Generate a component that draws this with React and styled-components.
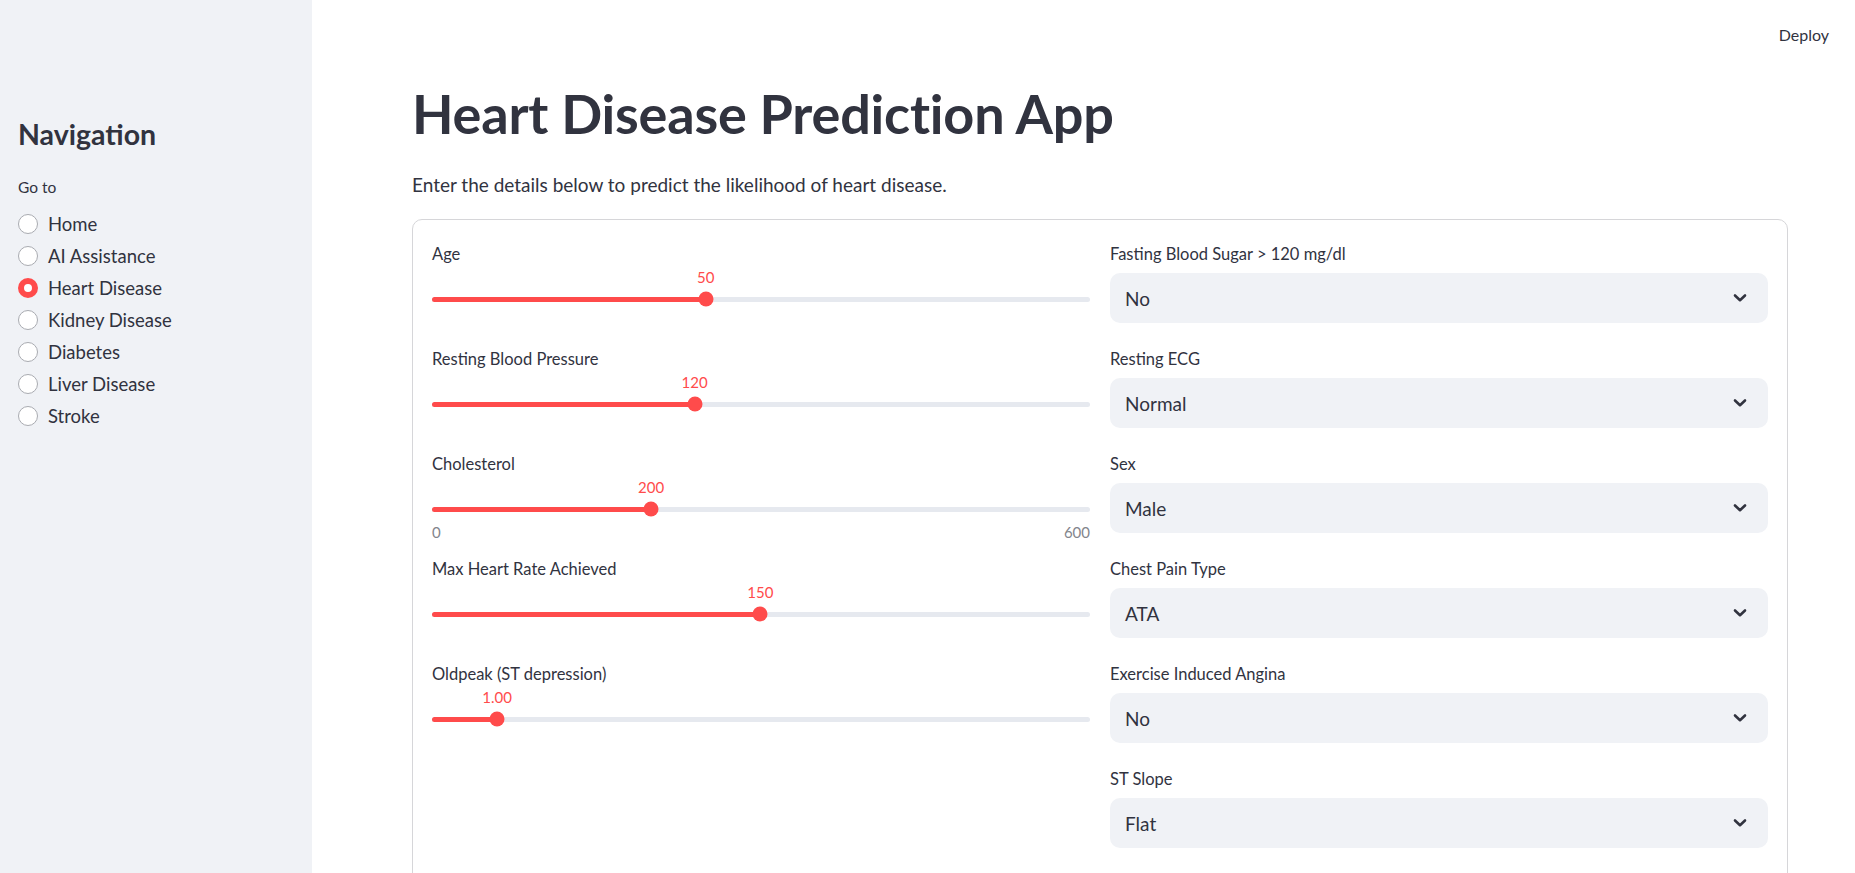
import React from 'react';
import styled, { createGlobalStyle } from 'styled-components';

const GlobalStyle = createGlobalStyle`
  html, body {
    margin: 0;
    padding: 0;
    background: #ffffff;
    font-family: Lato, "Liberation Sans", sans-serif;
    color: #31333f;
    overflow: hidden;
  }
`;

const pages = ['Home', 'AI Assistance', 'Heart Disease', 'Kidney Disease', 'Diabetes', 'Liver Disease', 'Stroke'];

const sliders = [
  { label: 'Age', value: '50', frac: 0.416 },
  { label: 'Resting Blood Pressure', value: '120', frac: 0.399 },
  { label: 'Cholesterol', value: '200', frac: 0.333, min: '0', max: '600' },
  { label: 'Max Heart Rate Achieved', value: '150', frac: 0.499 },
  { label: 'Oldpeak (ST depression)', value: '1.00', frac: 0.099 },
];

const selects = [
  { label: 'Fasting Blood Sugar > 120 mg/dl', value: 'No' },
  { label: 'Resting ECG', value: 'Normal' },
  { label: 'Sex', value: 'Male' },
  { label: 'Chest Pain Type', value: 'ATA' },
  { label: 'Exercise Induced Angina', value: 'No' },
  { label: 'ST Slope', value: 'Flat' },
];

const Chevron = () => (
  <svg width="14" height="10" viewBox="0 0 14 10" fill="none">
    <polyline points="2,2.5 7,7.2 12,2.5" stroke="#31333f" strokeWidth="2.6" strokeLinecap="round" strokeLinejoin="round" />
  </svg>
);

const Slider = ({ label, value, frac, min, max }) => (
  <Field>
    <Label>{label}</Label>
    <SliderArea>
      <ValueRow>
        <ThumbValue style={{ left: `${frac * 100}%` }}>{value}</ThumbValue>
      </ValueRow>
      <TrackRow>
        <Track>
          <Fill style={{ width: `${frac * 100}%` }} />
          <Thumb style={{ left: `${frac * 100}%` }} />
        </Track>
      </TrackRow>
      {min && (
        <Ticks>
          <span>{min}</span>
          <span>{max}</span>
        </Ticks>
      )}
    </SliderArea>
  </Field>
);

const Select = ({ label, value }) => (
  <Field>
    <Label>{label}</Label>
    <SelectBox>
      <span>{value}</span>
      <Chevron />
    </SelectBox>
  </Field>
);

export default function App() {
  return (
    <Page>
      <GlobalStyle />
      <Sidebar>
        <NavTitle>Navigation</NavTitle>
        <GoTo>Go to</GoTo>
        <RadioList>
          {pages.map((p) => (
            <RadioItem key={p}>
              <RadioCircle $checked={p === 'Heart Disease'} />
              <span>{p}</span>
            </RadioItem>
          ))}
        </RadioList>
      </Sidebar>
      <Main>
        <Header>
          <DeployButton>Deploy</DeployButton>
        </Header>
        <Content>
          <Title>Heart Disease Prediction App</Title>
          <Intro>Enter the details below to predict the likelihood of heart disease.</Intro>
          <Card>
            <Column>
              {sliders.map((s) => (
                <Slider key={s.label} {...s} />
              ))}
            </Column>
            <Column>
              {selects.map((s) => (
                <Select key={s.label} {...s} />
              ))}
            </Column>
          </Card>
        </Content>
      </Main>
    </Page>
  );
}

const Page = styled.div`
  display: flex;
  min-height: 100vh;
  height: 873px;
`;

const Sidebar = styled.aside`
  width: 312px;
  flex-shrink: 0;
  background: #f0f2f6;
  padding: 116px 18px 0 18px;
  box-sizing: border-box;
`;

const NavTitle = styled.h2`
  margin: 0;
  font-size: 28.5px;
  line-height: 36px;
  font-weight: 700;
  color: #31333f;
`;

const GoTo = styled.div`
  margin-top: 24px;
  font-size: 15.5px;
  line-height: 22px;
`;

const RadioList = styled.div`
  margin-top: 10px;
  display: flex;
  flex-direction: column;
`;

const RadioItem = styled.label`
  display: flex;
  align-items: center;
  gap: 10px;
  height: 32px;
  font-size: 18.5px;
  color: #31333f;
`;

const RadioCircle = styled.span`
  width: 20px;
  height: 20px;
  box-sizing: border-box;
  border-radius: 50%;
  flex-shrink: 0;
  background: #ffffff;
  border: ${({ $checked }) => ($checked ? '6px solid #ff4b4b' : '1px solid #a9abb1')};
`;

const Main = styled.main`
  flex: 1;
  display: flex;
  flex-direction: column;
  min-width: 0;
`;

const Header = styled.header`
  height: 68px;
  flex-shrink: 0;
  display: flex;
  justify-content: flex-end;
  align-items: center;
  padding-right: 26px;
`;

const DeployButton = styled.button`
  border: none;
  background: none;
  padding: 0;
  font-family: inherit;
  font-size: 16px;
  color: #31333f;
`;

const Content = styled.div`
  padding: 0 67px 0 100px;
`;

const Title = styled.h1`
  margin: 16px 0 0 0;
  font-size: 54px;
  line-height: 60px;
  font-weight: 700;
  color: #31333f;
  letter-spacing: -0.2px;
`;

const Intro = styled.p`
  margin: 27px 0 0 0;
  font-size: 19px;
  line-height: 28px;
`;

const Card = styled.section`
  margin-top: 20px;
  border: 1px solid #d6d6d9;
  border-radius: 10px;
  padding: 22px 19px 40px 19px;
  display: grid;
  grid-template-columns: 1fr 1fr;
  gap: 20px;
`;

const Column = styled.div`
  display: flex;
  flex-direction: column;
  gap: 24px;
`;

const Field = styled.div`
  display: flex;
  flex-direction: column;
  height: 81px;
`;

const Label = styled.div`
  font-size: 16.5px;
  line-height: 24px;
  color: #31333f;
  white-space: nowrap;
`;

const SliderArea = styled.div`
  position: relative;
`;

const ValueRow = styled.div`
  position: relative;
  height: 23px;
`;

const ThumbValue = styled.span`
  position: absolute;
  top: 0;
  transform: translateX(-50%);
  font-size: 15px;
  line-height: 23px;
  color: #ff4b4b;
`;

const TrackRow = styled.div`
  height: 20px;
  display: flex;
  align-items: center;
`;

const Track = styled.div`
  position: relative;
  width: 100%;
  height: 5px;
  border-radius: 3px;
  background: #e6e9ef;
`;

const Fill = styled.div`
  height: 100%;
  border-radius: 3px;
  background: #ff4b4b;
`;

const Thumb = styled.div`
  position: absolute;
  top: 50%;
  width: 15px;
  height: 15px;
  border-radius: 50%;
  background: #ff4b4b;
  transform: translate(-50%, -50%);
`;

const Ticks = styled.div`
  position: absolute;
  left: 0;
  right: 0;
  top: 44px;
  display: flex;
  justify-content: space-between;
  font-size: 15px;
  line-height: 24px;
  color: #83858c;
`;

const SelectBox = styled.div`
  margin-top: 7px;
  height: 50px;
  border-radius: 10px;
  background: #f0f2f6;
  display: flex;
  align-items: center;
  justify-content: space-between;
  padding: 0 21px 0 15px;
  font-size: 19px;
  color: #31333f;
`;
